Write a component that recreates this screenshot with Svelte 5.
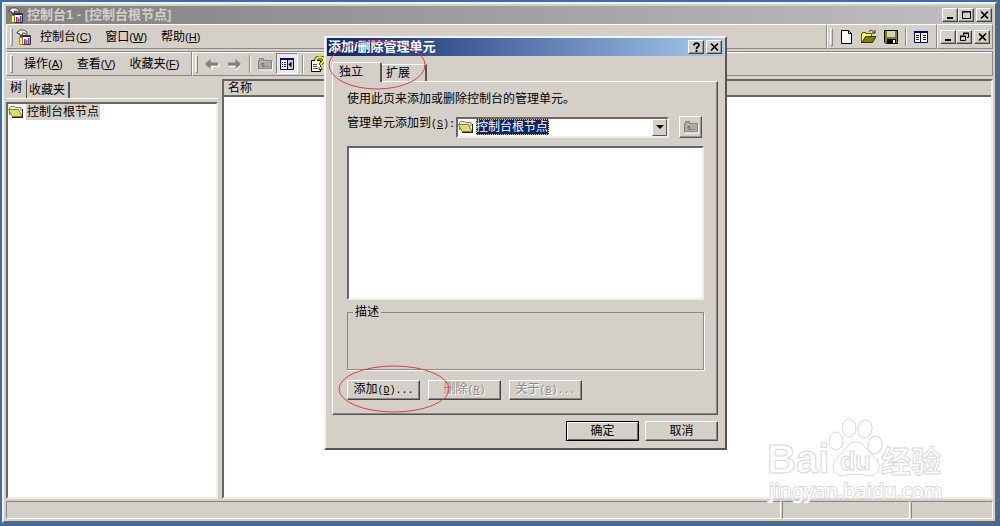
<script lang="ts">
    const menus = [
        { label: '控制台', key: 'C' },
        { label: '窗口', key: 'W' },
        { label: '帮助', key: 'H' },
    ];
    const actions = [
        { label: '操作', key: 'A' },
        { label: '查看', key: 'V' },
        { label: '收藏夹', key: 'F' },
    ];

    let target = $state('root');
</script>

{#snippet consoleIcon()}
    <svg class="icon" viewBox="0 0 16 16" aria-hidden="true">
        <path d="M6.500 6.500h8v9h-8z" fill="#fff" stroke="#333" />
        <path d="M7 7h7v1H7z" fill="#202070" />
        <path d="M8 10h1.500v5H8z" fill="#c02040" />
        <path d="M10 11h1.500v4H10z" fill="#c040a0" />
        <path d="M12 9h1.500v6H12z" fill="#4040c0" />
        <path d="M1 4.500V3h1l1.500-2H8l3 2v2.500L8.500 4H6.500v2h-3V4.500z" fill="#eee" stroke="#333" stroke-width=".8" />
        <path d="M4 6h2v3H4z" fill="#444" />
        <path d="M3.500 8.500h3v7h-3z" fill="#ffff20" stroke="#776" stroke-width=".8" />
    </svg>
{/snippet}

{#snippet folderIcon()}
    <svg class="icon" viewBox="0 0 16 16" aria-hidden="true">
        <path d="M1.500 11V3.500l1-1h4l1 1h5.500V7" fill="#f0f0c0" stroke="#808050" />
        <path d="M.5 5.500h10l3.500 7H4z" fill="#dcdc70" stroke="#808040" />
        <path d="M4 13.500h11M14.500 13V5" fill="none" stroke="#222" />
    </svg>
{/snippet}

{#snippet upFolderIcon()}
    <svg class="icon" viewBox="0 0 16 16" aria-hidden="true">
        <path d="M1.500 13V4.500h1v-2h4v2h8V13z" fill="#aaaaa6" stroke="#808080" />
        <path d="M2 14h13.500V6" fill="none" stroke="#fff" />
        <path d="M6 11V7M4.500 8.500 6 7l1.500 1.500M6 10.500h2M9 10.500h1M11 10.500h1" fill="none" stroke="#6c6c6c" />
        <path d="M3 5.500h10" stroke="#c8c8c4" stroke-dasharray="1 1" />
    </svg>
{/snippet}

{#snippet closeGlyph()}
    <svg class="glyph" viewBox="0 0 11 10" aria-hidden="true">
        <path d="m2 1.500 7 7M9 1.500l-7 7" stroke="#000" stroke-width="1.700" />
    </svg>
{/snippet}

{#snippet minGlyph()}
    <svg class="glyph" viewBox="0 0 11 10" aria-hidden="true"><path d="M2 7h6v2H2z" /></svg>
{/snippet}

<div class="desktop">
    <main class="window">
        <header class="titlebar">
            {@render consoleIcon()}
            <h1>控制台1 - [控制台根节点]</h1>
            <div class="captions">
                <button aria-label="最小化">{@render minGlyph()}</button>
                <button aria-label="最大化">
                    <svg class="glyph" viewBox="0 0 11 10" aria-hidden="true">
                        <path d="M1.500 1.500h8v7h-8zM1 2h9" fill="none" stroke="#000" />
                    </svg>
                </button>
                <button class="close" aria-label="关闭">{@render closeGlyph()}</button>
            </div>
        </header>

        <div class="band">
            <nav class="section grow">
                <i class="grip"></i>
                {@render consoleIcon()}
                <div class="menus">
                    {#each menus as m}
                        <button class="menu">{m.label}<span>(<u>{m.key}</u>)</span></button>
                    {/each}
                </div>
            </nav>
            <div class="section tools">
                <i class="grip"></i>
                <button class="tool" aria-label="新建">
                    <svg class="icon" viewBox="0 0 16 16" aria-hidden="true">
                        <path d="M2.500 1.500h7l3 3v10h-10z" fill="#fff" stroke="#000" />
                        <path d="M9.500 1.500v3h3" fill="none" stroke="#000" />
                    </svg>
                </button>
                <button class="tool" aria-label="打开">
                    <svg class="icon" viewBox="0 0 16 16" aria-hidden="true">
                        <path d="M.5 14V4.500h1v-1h3v1h6V8" fill="#ffff60" stroke="#555500" />
                        <path d="M1 13.500 4.500 7.500H15l-3.500 6z" fill="#808000" stroke="#333300" />
                        <path d="M8 2.500c2-2 4-1 5 1M11 4h3V1" fill="none" stroke="#222" />
                    </svg>
                </button>
                <button class="tool" aria-label="保存">
                    <svg class="icon" viewBox="0 0 16 16" aria-hidden="true">
                        <path d="M1.500 1.500h13v13H3l-1.500-1.500z" fill="#808000" stroke="#000" />
                        <path d="M4 2h8v6H4z" fill="#d4d0c8" />
                        <path d="M4 10h9v5H4z" fill="#000" />
                        <path d="M10 11h2v3h-2z" fill="#fff" />
                    </svg>
                </button>
                <i class="sep"></i>
                <button class="tool" aria-label="属性">
                    <svg class="icon" viewBox="0 0 16 16" aria-hidden="true">
                        <path d="M1.500 2.500h13v11h-13z" fill="#fff" stroke="#000090" />
                        <path d="M1 3h14" stroke="#000090" stroke-width="2" />
                        <path d="M7.500 3v11" stroke="#000090" />
                        <path d="M3 6.500h3M3 8.500h3M3 10.500h3M10 6.500h3M10 8.500h3M10 10.500h3" stroke="#222" />
                    </svg>
                </button>
            </div>
            <div class="section captions inner">
                <button aria-label="最小化子窗口">{@render minGlyph()}</button>
                <button aria-label="还原子窗口">
                    <svg class="glyph" viewBox="0 0 11 10" aria-hidden="true">
                        <path d="M4.500 3V1.500h5v4H8M4 1h6M1.500 4.500h5v4h-5zM1 4h6" fill="none" stroke="#000" />
                    </svg>
                </button>
                <button class="close" aria-label="关闭子窗口">{@render closeGlyph()}</button>
            </div>
        </div>

        <div class="band">
            <nav class="section actions">
                <i class="grip"></i>
                <div class="menus">
                    {#each actions as m}
                        <button class="menu">{m.label}<span>(<u>{m.key}</u>)</span></button>
                    {/each}
                </div>
            </nav>
            <div class="section grow browse">
                <i class="grip"></i>
                <button class="tool" aria-label="后退" disabled>
                    <svg class="icon" viewBox="0 0 16 16" aria-hidden="true">
                        <path d="m3 9 5 4.500v-3h7v-3" fill="none" stroke="#fff" />
                        <path d="m1 8 5.500-5v3.500H14v3H6.500V13z" fill="#808080" />
                    </svg>
                </button>
                <button class="tool" aria-label="前进" disabled>
                    <svg class="icon" viewBox="0 0 16 16" aria-hidden="true">
                        <path d="M3 10.500h7v3.500l5-5.500" fill="none" stroke="#fff" />
                        <path d="M15 8 9.500 3v3.500H2v3h7.500V13z" fill="#808080" />
                    </svg>
                </button>
                <i class="sep"></i>
                <button class="tool" aria-label="上移一级" disabled>{@render upFolderIcon()}</button>
                <button class="tool pressed" aria-label="显示/隐藏控制台树">
                    <svg class="icon" viewBox="0 0 16 16" aria-hidden="true">
                        <path d="M1.500 2.500h13v11h-13z" fill="#fff" stroke="#000090" />
                        <path d="M1 3h14" stroke="#000090" stroke-width="2" />
                        <path d="M9 4h5v9H9z" fill="#d4d0c8" />
                        <path d="M8.500 3v11" stroke="#000090" />
                        <path d="M3 6.500h1M5 6.500h2M3 8.500h1M5 8.500h2M3 10.500h1M5 10.500h2" stroke="#000090" />
                        <path d="M12.500 5.500v6l-3-3z" />
                    </svg>
                </button>
                <i class="sep"></i>
                <button class="tool" aria-label="帮助">
                    <svg class="icon" viewBox="0 0 16 16" aria-hidden="true">
                        <path d="M1.500 4.500h9v11h-9z" fill="#fff" stroke="#000" />
                        <path d="M3 8.500h4M3 10.500h4M3 12.500h5" stroke="#555" />
                        <path d="M6 5c0-5 8-4.500 8-1 0 3-3.500 2-3.500 5M10.500 11v3" fill="none" stroke="#222" stroke-width="3.500" />
                        <path d="M6 5c0-5 8-4.500 8-1 0 3-3.500 2-3.500 5M10.500 11v2" fill="none" stroke="#ffff00" stroke-width="2" />
                    </svg>
                </button>
            </div>
        </div>

        <div class="panes">
            <section class="left">
                <div class="treetabs" role="tablist">
                    <button role="tab" aria-selected="true">树</button>
                    <button role="tab" aria-selected="false">收藏夹</button>
                </div>
                <div class="tree" role="tree">
                    <div class="node" role="treeitem" aria-selected="true">
                        {@render folderIcon()}
                        <span>控制台根节点</span>
                    </div>
                </div>
            </section>
            <section class="right">
                <table>
                    <thead><tr><th>名称</th></tr></thead>
                </table>
            </section>
        </div>

        <footer class="status">
            <div></div>
            <div></div>
            <div></div>
        </footer>
    </main>

    <svg class="watermark" viewBox="0 0 190 92" aria-hidden="true">
        <g class="mark">
            <text class="bai" x="5" y="57">Bai</text>
            <ellipse cx="74" cy="25" rx="7" ry="9" />
            <ellipse cx="87" cy="12" rx="7" ry="9" />
            <ellipse cx="103" cy="13" rx="7" ry="9" transform="rotate(12 103 13)" />
            <ellipse cx="113" cy="29" rx="7" ry="9" transform="rotate(12 113 29)" />
            <path d="M93 26c8 0 11 7 16 12 6 5 9 9 8 14-1 8-8 9-14 7-6-1-12-1-18 0-7 2-14 0-14-8 0-6 4-9 9-14 4-5 7-11 13-11z" />
            <text class="du" x="78" y="54">du</text>
            <text class="jy" x="119" y="56">经验</text>
            <text class="site" x="7" y="82">jingyan.baidu.com</text>
        </g>
    </svg>

    <div class="dialog" role="dialog" aria-labelledby="dialog-title">
        <header class="titlebar active">
            <h2 id="dialog-title">添加/删除管理单元</h2>
            <div class="captions">
                <button aria-label="帮助">
                    <svg class="glyph" viewBox="0 0 11 10" aria-hidden="true">
                        <path d="M3 3.500C3 .5 8 .5 8 3 8 5 5.500 4.500 5.500 7M5.500 8v2" fill="none" stroke="#000" stroke-width="1.800" />
                    </svg>
                </button>
                <button class="close" aria-label="关闭">{@render closeGlyph()}</button>
            </div>
        </header>

        <div class="tabs" role="tablist">
            <button role="tab" aria-selected="true">独立</button>
            <button role="tab" aria-selected="false">扩展</button>
        </div>
        <div class="sheet" role="tabpanel">
            <p>使用此页来添加或删除控制台的管理单元。</p>
            <div class="addto">
                <label for="target">管理单元添加到<span class="half">(<u>S</u>):</span></label>
                <div class="combo">
                    {@render folderIcon()}
                    <select id="target" bind:value={target}>
                        <option value="root">控制台根节点</option>
                    </select>
                    <i class="arrow"></i>
                </div>
                <button class="up" aria-label="上移一级" disabled>{@render upFolderIcon()}</button>
            </div>
            <div class="list" role="listbox" aria-label="管理单元" tabindex="-1"></div>
            <fieldset>
                <legend>描述</legend>
            </fieldset>
            <div class="row">
                <button class="push">添加<span class="half">(<u>D</u>)...</span></button>
                <button class="push" disabled>删除<span class="half">(<u>R</u>)</span></button>
                <button class="push" disabled>关于<span class="half">(<u>B</u>)...</span></button>
            </div>
        </div>
        <div class="row footer">
            <button class="push default">确定</button>
            <button class="push">取消</button>
        </div>

        <svg class="ring ring-tabs" viewBox="0 0 98 50" aria-hidden="true"><ellipse cx="49" cy="25" rx="48" ry="24" /></svg>
        <svg class="ring ring-add" viewBox="0 0 112 50" aria-hidden="true"><ellipse cx="56" cy="25" rx="55" ry="23" /></svg>
    </div>
</div>

<style>
    :global(body) {
        margin: 0;
    }
    .desktop {
        --face: #d4d0c8;
        --dark: #555;
        position: relative;
        display: flex;
        box-sizing: border-box;
        min-height: 100vh;
        padding: 2px 3px 3px 2px;
        overflow: hidden;
        background: #3a6ea5;
        color: #000;
        font: 12px/16px 'Liberation Sans', 'Noto Sans CJK SC', sans-serif;
    }
    .desktop :is(button, select) {
        box-sizing: border-box;
        margin: 0;
        padding: 0;
        border: 0;
        border-radius: 0;
        background: none;
        color: inherit;
        font: inherit;
        white-space: nowrap;
    }
    .icon {
        display: block;
        flex: none;
        width: 16px;
        height: 16px;
    }
    .glyph {
        display: block;
        width: 11px;
        height: 10px;
    }

    /* console window */
    .window {
        display: flex;
        flex: 1;
        flex-direction: column;
        min-width: 0;
        padding: 2px;
        border: 2px solid;
        border-color: #f4f2ee #666 #666 #f4f2ee;
        background: var(--face);
    }
    .titlebar {
        display: flex;
        align-items: center;
        gap: 3px;
        height: 18px;
        padding: 0 1px 0 2px;
        background: linear-gradient(90deg, #808080, #c0c0c0);
        color: #d4d0c8;
    }
    .titlebar :is(h1, h2) {
        flex: 1;
        margin: 0;
        font-size: 13px;
        line-height: 16px;
        font-weight: bold;
    }
    .titlebar.active {
        padding: 0 2px 0 1px;
        background: linear-gradient(90deg, #0a246a, #a6caf0);
        color: #fff;
    }
    .captions {
        display: flex;
        align-items: center;
    }
    .captions button {
        display: grid;
        place-items: center;
        width: 16px;
        height: 14px;
        border: 1px solid;
        border-color: #fff #444 #444 #fff;
        background: var(--face);
        box-shadow: inset -1px -1px #999;
    }
    .captions .close {
        margin-left: 2px;
    }

    .band {
        display: flex;
        height: 25px;
    }
    .section {
        display: flex;
        align-items: center;
        box-sizing: border-box;
        padding-left: 3px;
        border: 1px solid;
        border-color: #fff #888 #888 #fff;
    }
    .band + .band {
        margin-top: 2px;
    }
    .band + .band .section {
        border-top-color: #888;
        box-shadow: inset 0 1px #fff;
    }
    .grow {
        flex: 1;
    }
    .grip {
        flex: none;
        box-sizing: border-box;
        width: 3px;
        height: 18px;
        margin-right: 3px;
        border: 1px solid;
        border-color: #fff #888 #888 #fff;
    }
    .menus {
        display: flex;
        gap: 14px;
        margin-left: 8px;
    }
    .menu span {
        font-size: 11px;
    }
    .tools {
        padding-left: 2px;
        padding-right: 4px;
    }
    .tool {
        display: grid;
        place-items: center;
        width: 22px;
        height: 21px;
    }
    .desktop .pressed {
        border: 1px solid;
        border-color: #808080 #fff #fff #808080;
        background: #ebe9e4;
    }
    .sep {
        width: 1px;
        height: 18px;
        margin: 0 3px;
        border-right: 1px solid #fff;
        background: #888;
    }
    .inner {
        padding: 0 2px;
    }
    .actions {
        width: 186px;
    }
    .browse {
        padding-left: 2px;
    }
    .browse .sep {
        margin-left: 4px;
    }

    .panes {
        display: flex;
        flex: 1;
        gap: 4px;
        margin-top: 3px;
    }
    .left {
        display: flex;
        flex-direction: column;
        width: 212px;
    }
    .treetabs {
        display: flex;
        align-items: flex-end;
        height: 19px;
        border-bottom: 1px solid #fff;
    }
    .treetabs button {
        height: 16px;
        padding: 0 3px 0 2px;
        border-right: 2px solid var(--dark);
    }
    .treetabs [aria-selected='true'] {
        height: 19px;
        padding: 0 4px 2px;
        border-top: 1px solid #fff;
        border-right-width: 1px;
    }
    .tree,
    .right {
        flex: 1;
        border: 2px solid;
        border-color: #666 #f0eeea #f0eeea #666;
        background: #fff;
    }
    .tree {
        margin-top: 3px;
    }
    .node {
        display: flex;
        align-items: center;
        gap: 2px;
    }
    .node span {
        padding: 0 1px;
        background: var(--face);
    }
    table {
        width: 100%;
        border-collapse: collapse;
    }
    th {
        height: 14px;
        padding: 0 4px;
        border-bottom: 2px solid #666;
        background: var(--face);
        font-weight: normal;
        line-height: 14px;
        text-align: left;
    }
    .status {
        display: grid;
        grid-template-columns: 1fr 128px 82px;
        gap: 1px;
        margin-top: 2px;
    }
    .status div {
        height: 16px;
        border: 1px solid;
        border-color: #888 #fff #fff #888;
    }

    /* snap-in dialog */
    .dialog {
        position: absolute;
        top: 36px;
        left: 324px;
        box-sizing: border-box;
        width: 403px;
        padding: 0 1px 7px;
        border: 2px solid;
        border-color: #f4f2ee #555 #555 #f4f2ee;
        background: var(--face);
    }
    .tabs {
        display: flex;
        align-items: flex-end;
        height: 20px;
        margin: 5px 5px 0;
    }
    .tabs button {
        height: 17px;
        padding: 0 15px 0 4px;
        border-top: 1px solid #fff;
        border-right: 2px solid var(--dark);
    }
    .tabs [aria-selected='true'] {
        position: relative;
        height: 20px;
        margin-bottom: -1px;
        padding: 0 17px 2px 6px;
        border-left: 1px solid #fff;
        border-radius: 2px 2px 0 0;
        background: var(--face);
    }
    .sheet {
        margin: 0 6px 0 5px;
        padding: 9px 13px 14px 14px;
        border: 1px solid;
        border-color: #fff var(--dark) var(--dark) #fff;
        box-shadow: inset -1px -1px #888;
    }
    .sheet p {
        margin: 0;
    }
    .half {
        font: 10px/16px 'Liberation Mono', monospace;
    }
    .addto {
        display: flex;
        align-items: center;
        height: 22px;
        margin-top: 9px;
    }
    .addto label {
        width: 109px;
        padding-bottom: 6px;
        white-space: nowrap;
    }
    .combo {
        display: flex;
        align-items: center;
        gap: 2px;
        box-sizing: border-box;
        width: 213px;
        height: 21px;
        border: 2px solid;
        border-color: #666 #f0eeea #f0eeea #666;
        background: #fff;
    }
    .combo select {
        appearance: none;
        height: 16px;
        outline: 1px dotted #d8c060;
        outline-offset: -1px;
        background: #0a246a;
        color: #fff;
    }
    .arrow {
        display: grid;
        place-items: center;
        box-sizing: border-box;
        width: 15px;
        height: 17px;
        margin-left: auto;
        border: 1px solid;
        border-color: #fff #555 #555 #fff;
        background: var(--face);
    }
    .arrow::before {
        content: '';
        border: 4px solid transparent;
        border-top-color: #000;
        border-bottom: 0;
    }
    .desktop .up {
        display: grid;
        place-items: center;
        width: 23px;
        height: 22px;
        margin-left: 10px;
        border: 1px solid;
        border-color: #fff #555 #555 #fff;
        box-shadow: inset -1px -1px #999;
    }
    .list {
        height: 150px;
        margin-top: 8px;
        border: 2px solid;
        border-color: #666 #f0eeea #f0eeea #666;
        background: #fff;
    }
    fieldset {
        height: 66px;
        box-sizing: border-box;
        margin: 4px 0 10px;
        padding: 0 5px;
        border: 1px solid #888;
        box-shadow: 1px 1px #fff;
    }
    legend {
        padding: 0 2px;
        line-height: 16px;
    }
    .desktop .row {
        display: flex;
        gap: 8px;
    }
    .desktop .row .push {
        width: 73px;
        height: 20px;
        border: 1px solid;
        border-color: #fff #444 #444 #fff;
        box-shadow: inset -1px -1px #888;
    }
    .desktop .push:disabled {
        color: #888;
        text-shadow: 1px 1px #fff;
    }
    .desktop .row .default {
        border-color: #000;
        box-shadow: inset 1px 1px #fff, inset -1px -1px #666;
    }
    .desktop .footer {
        justify-content: flex-end;
        gap: 6px;
        margin: 6px 6px 0;
    }

    .ring {
        position: absolute;
        fill: none;
        stroke: #e03c3c;
        stroke-width: 1;
        pointer-events: none;
    }
    .ring-tabs {
        top: 2px;
        left: 2px;
        width: 98px;
        height: 50px;
    }
    .ring-add {
        top: 326px;
        left: 12px;
        width: 112px;
        height: 50px;
    }
    .watermark {
        position: absolute;
        right: 48px;
        bottom: 18px;
        width: 190px;
        height: 92px;
        pointer-events: none;
    }
    .mark {
        fill: #fff;
        stroke: #d8d8d8;
        stroke-width: 1;
        font-weight: bold;
    }
    .bai {
        font-size: 40px;
    }
    .du {
        font-size: 25px;
    }
    .jy {
        font-size: 30px;
    }
    .site {
        font-family: 'Noto Sans', sans-serif;
        font-size: 20px;
        font-weight: normal;
        paint-order: stroke;
        stroke-width: 2;
    }
</style>
